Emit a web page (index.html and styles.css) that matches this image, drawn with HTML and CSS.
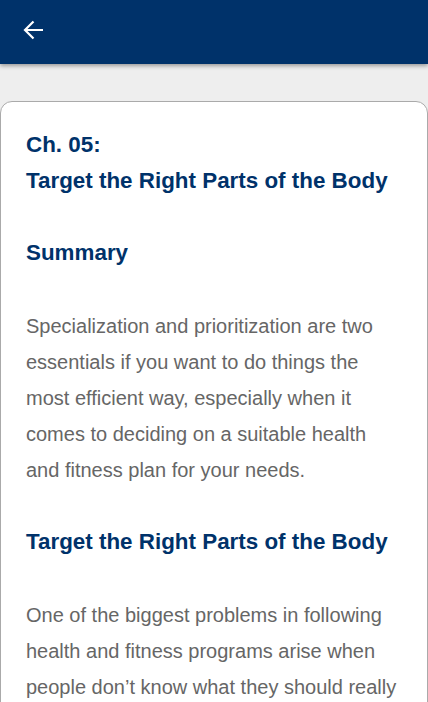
FILE: index.html
```html
<!DOCTYPE html>
<html lang="en">
<head>
<meta charset="utf-8">
<title>Ch. 05</title>
<link rel="stylesheet" href="styles.css">
</head>
<body>
<header class="topbar">
  <button class="back" aria-label="Back">
    <svg width="24" height="24" viewBox="0 0 24 24"><path d="M21 12H3.5M11.5 3.5L3 12l8.5 8.5" fill="none" stroke="#fff" stroke-width="2.2"/></svg>
  </button>
</header>
<main class="content">
  <article class="card">
    <h1 class="title">Ch. 05:<br>Target the Right Parts of the Body</h1>
    <h2 class="section">Summary</h2>
    <p class="text">Specialization and prioritization are two essentials if you want to do things the most efficient way, especially when it comes to deciding on a suitable health and fitness plan for your needs.</p>
    <h2 class="section">Target the Right Parts of the Body</h2>
    <p class="text">One of the biggest problems in following health and fitness programs arise when people don’t know what they should really focus on and end up doing everything at once.</p>
  </article>
</main>
</body>
</html>
```
FILE: styles.css
```css
html, body {
  margin: 0;
  padding: 0;
}
body {
  background: #eeeeee;
  font-family: "Liberation Sans", Arial, sans-serif;
  overflow: hidden;
  height: 702px;
}
.topbar {
  height: 64px;
  background: #00326a;
  display: flex;
  align-items: center;
  padding-left: 22px;
  box-shadow: 0 2px 4px rgba(0, 0, 0, 0.35);
  position: relative;
  z-index: 1;
}
.back {
  background: none;
  border: 0;
  padding: 0;
  width: 24px;
  height: 24px;
  display: flex;
  margin-top: -4px;
}
.content {
  padding-top: 37px;
}
.card {
  background: #fff;
  border: 1px solid #aaaaaa;
  border-radius: 12px;
  padding: 25px 25px 40px;
}
.title, .section {
  margin: 0;
  color: #00326a;
  font-weight: bold;
  font-size: 22.4px;
  line-height: 36px;
}
.section {
  margin-top: 36px;
}
.text {
  margin: 37px 0 0;
  color: #666666;
  font-size: 20px;
  line-height: 36px;
}
```
